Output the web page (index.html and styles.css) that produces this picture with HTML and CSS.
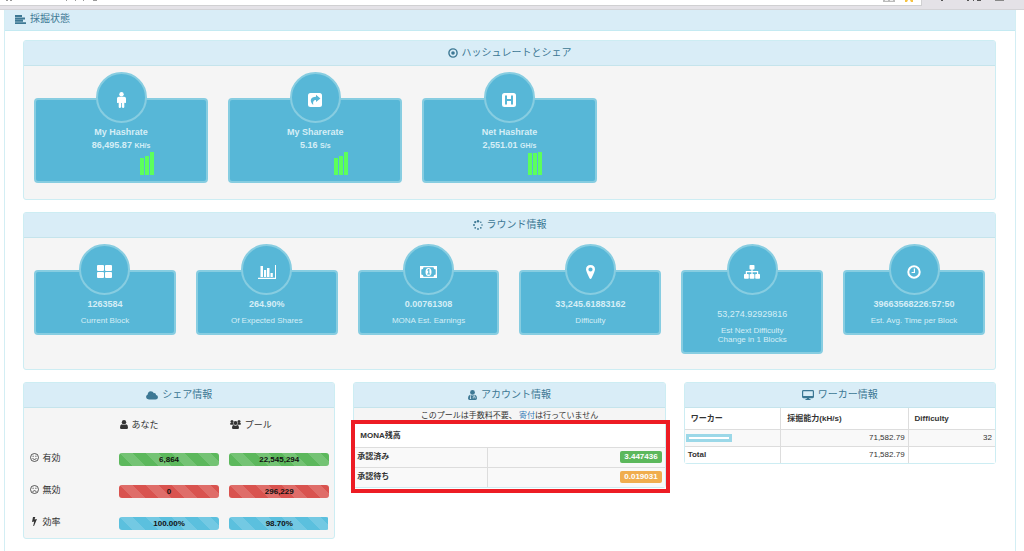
FILE: index.html
```html
<!DOCTYPE html>
<html lang="ja">
<head>
<meta charset="utf-8">
<title>採掘状態</title>
<link rel="stylesheet" href="styles.css">
</head>
<body>
<div class="toolbar" aria-hidden="true">
  <div class="toolbar-field">
    <svg width="100" height="2" viewBox="0 0 100 2"><path fill="#999" d="M6 0h2v1H6zM10 0h2v1h-2zM66 0h1v1h-1zM75 0h1v1h-1zM83 0h1v1h-1zM93 0h4v1h-4z"/></svg>
    <svg width="40" height="2" viewBox="0 0 40 2"><path fill="#bbb" d="M2 0h12v2H2z"/><path fill="#eee" d="M4 0h3v1H4zM9 0h3v1H9z"/><path fill="#f5c242" d="M24 0h3l-1 2h-2zM29 0h3v2h-2z"/></svg>
  </div>
  <svg class="toolbar-actions" width="90" height="2" viewBox="0 0 90 2"><path fill="#555" d="M7 0h2v1H7zM33 0h2v1h-2zM39 0h1v1h-1zM43 0h4v1h-4z"/><path fill="#888" d="M61 0h9v1h-9z"/></svg>
</div>

<main class="dashboard">
  <h1 class="dashboard-title">
    <svg width="11" height="9" viewBox="0 0 11 9"><path fill="currentColor" d="M0 0h7v2H0zM0 2.400h10v2H0zM0 4.800h8v2H0zM0 7.200h11V9H0z"/></svg>
    採掘状態
  </h1>
  <div class="dashboard-body">

    <section class="panel">
      <h2 class="panel-title">
        <svg width="10" height="10" viewBox="0 0 10 10"><circle cx="5" cy="5" r="4.100" fill="none" stroke="currentColor" stroke-width="1.400"/><circle cx="5" cy="5" r="1.800" fill="currentColor"/></svg>
        ハッシュレートとシェア
      </h2>
      <div class="cards cards-rate">
        <article class="card">
          <div class="card-icon"><svg width="9" height="16" viewBox="0 0 9 16"><circle cx="4.500" cy="2.300" r="2.200" fill="#fff"/><path fill="#fff" d="M1.800 4.800h5.400Q9 4.800 9 6.600v3.600q0 .9-.8.9t-.9-.9v4.700q0 1-1.200 1-.9 0-1.200-1V11h-.8v3.900q-.3 1-1.200 1-1.200 0-1.200-1v-4.700q-.1.9-.9.9T0 10.200V6.600q0-1.800 1.800-1.800z"/></svg></div>
          <h3 class="card-value">My Hashrate</h3>
          <p class="card-value">86,495.87 <small>KH/s</small></p>
          <svg class="card-bars" width="14" height="23" viewBox="0 0 14 23"><path fill="#5cff5c" d="M0 6h4v17H0zM5 4h4v19H5zM10 0h4v23h-4z"/></svg>
        </article>
        <article class="card">
          <div class="card-icon"><svg width="14" height="14" viewBox="0 0 14 14"><rect width="14" height="14" rx="2.500" fill="#fff"/><path fill="#57b7d7" d="M8 1.800 12.400 5.400 8 9V7.100C5.600 7 4.700 8.600 5.200 12 1 8.200 2.500 3.800 8 3.800z"/></svg></div>
          <h3 class="card-value">My Sharerate</h3>
          <p class="card-value">5.16 <small>S/s</small></p>
          <svg class="card-bars" width="14" height="23" viewBox="0 0 14 23"><path fill="#5cff5c" d="M0 6h4v17H0zM5 4h4v19H5zM10 0h4v23h-4z"/></svg>
        </article>
        <article class="card">
          <div class="card-icon"><svg width="14" height="14" viewBox="0 0 14 14"><rect width="14" height="14" rx="2.500" fill="#fff"/><path fill="none" stroke="#57b7d7" stroke-width="2" d="M4 2.500v9M10 2.500v9M4 7h6"/></svg></div>
          <h3 class="card-value">Net Hashrate</h3>
          <p class="card-value">2,551.01 <small>GH/s</small></p>
          <svg class="card-bars" width="14" height="23" viewBox="0 0 14 23"><path fill="#5cff5c" d="M0 1h4v22H0zM5 1h4v22H5zM10 0h4v23h-4z"/></svg>
        </article>
      </div>
    </section>

    <section class="panel">
      <h2 class="panel-title">
        <svg width="10" height="10" viewBox="0 0 10 10"><g fill="currentColor"><circle cx="5" cy="1.200" r="1.200"/><circle cx="7.800" cy="2.200" r=".8"/><circle cx="9" cy="5" r=".8"/><circle cx="7.800" cy="7.800" r=".9"/><circle cx="5" cy="9" r=".9"/><circle cx="2.200" cy="7.800" r=".9"/><circle cx="1" cy="5" r="1"/><circle cx="2.200" cy="2.200" r="1.100"/></g></svg>
        ラウンド情報
      </h2>
      <div class="cards cards-round">
        <article class="card">
          <div class="card-icon"><svg width="15" height="13" viewBox="0 0 15 13"><g fill="#fff"><rect width="7" height="6" rx="1"/><rect x="8" width="7" height="6" rx="1"/><rect y="7" width="7" height="6" rx="1"/><rect x="8" y="7" width="7" height="6" rx="1"/></g></svg></div>
          <h3 class="card-value">1263584</h3>
          <p class="card-label">Current Block</p>
        </article>
        <article class="card">
          <div class="card-icon"><svg width="18" height="14" viewBox="0 0 18 14"><path fill="#fff" d="M0 12.700h17V0h1v14H0zM2.500 1H5v11H2.500zM6 5h2.200v7H6zM9 3h2.500v9H9zM12.500 8h2.300v4h-2.300z"/></svg></div>
          <h3 class="card-value">264.90%</h3>
          <p class="card-label">Of Expected Shares</p>
        </article>
        <article class="card">
          <div class="card-icon"><svg width="17" height="12" viewBox="0 0 17 12"><path fill="#fff" d="M0 0h17v12H0z"/><path fill="#57b7d7" d="M3.500 1.300h10q0 2.200 2.200 2.200v5q-2.200 0-2.200 2.200h-10q0-2.200-2.200-2.200v-5q2.200 0 2.200-2.200z"/><ellipse cx="8.500" cy="6" rx="3" ry="4" fill="#fff"/><path fill="#57b7d7" d="M7.300 4 8.400 3h1v4.500h.8v1H7.100v-1H8.200v-3l-.6.4z"/></svg></div>
          <h3 class="card-value">0.00761308</h3>
          <p class="card-label">MONA Est. Earnings</p>
        </article>
        <article class="card">
          <div class="card-icon"><svg width="9" height="14" viewBox="0 0 9 14"><path fill="#fff" fill-rule="evenodd" d="M4.500 0Q9 .2 9 4.500 9 6 5.500 13.300q-1 1.200-2 0Q0 6 0 4.500 0 .2 4.500 0zm0 2.400a2.100 2.100 0 1 0 0 4.200 2.100 2.100 0 1 0 0-4.200z"/></svg></div>
          <h3 class="card-value">33,245.61883162</h3>
          <p class="card-label">Difficulty</p>
        </article>
        <article class="card">
          <div class="card-icon"><svg width="16" height="14" viewBox="0 0 16 14"><g fill="#fff"><rect x="5.500" width="5" height="4.500" rx=".8"/><rect y="9" width="4.800" height="4.800" rx=".8"/><rect x="5.600" y="9" width="4.800" height="4.800" rx=".8"/><rect x="11.200" y="9" width="4.800" height="4.800" rx=".8"/></g><path fill="none" stroke="#fff" stroke-width="1.200" d="M8 4v5M2.400 9V6.600h11.200V9"/></svg></div>
          <p class="card-value card-value-plain">53,274.92929816</p>
          <p class="card-label">Est Next Difficulty<br>Change in 1 Blocks</p>
        </article>
        <article class="card">
          <div class="card-icon"><svg width="14" height="14" viewBox="0 0 14 14"><circle cx="7" cy="7" r="5.700" fill="none" stroke="#fff" stroke-width="2"/><path fill="none" stroke="#fff" stroke-width="1.200" d="M7.400 3.500v4H4.600"/></svg></div>
          <h3 class="card-value">39663568226:57:50</h3>
          <p class="card-label">Est. Avg. Time per Block</p>
        </article>
      </div>
    </section>

    <div class="columns">
      <section class="panel">
        <h2 class="panel-title">
          <svg width="12" height="9" viewBox="0 0 12 9"><path fill="currentColor" d="M3 8.500Q.2 8.300 0 6q.1-1.700 1.700-2.400Q1.800.4 4.800.2 7 .3 7.900 2.200q1.700-.7 2.200 1.700Q12 4.400 12 6.200q-.2 2.200-2.500 2.300z"/></svg>
          シェア情報
        </h2>
        <table class="shares">
          <thead>
            <tr>
              <td></td>
              <th scope="col"><svg width="8" height="9" viewBox="0 0 8 9"><circle cx="4" cy="2.200" r="2.200" fill="currentColor"/><path fill="currentColor" d="M1.800 4.200q2.200 1.600 4.400 0Q8 4.600 8 7.500 8 9 6.700 9H1.300Q0 9 0 7.500 0 4.600 1.800 4.200z"/></svg> あなた</th>
              <th scope="col"><svg width="11" height="9" viewBox="0 0 11 9"><g fill="currentColor"><circle cx="2" cy="1.600" r="1.500"/><circle cx="9" cy="1.600" r="1.500"/><circle cx="5.500" cy="3" r="2"/><path d="M1 3h2.200q0 1 .8 1.700H1.500Q0 5 0 3.800 0 3 1 3zM10 3H7.800q0 1-.8 1.700h2.500Q11 5 11 3.800 11 3 10 3zM3.600 5q1.900 1.300 3.800 0Q9 5.300 9 7.700 9 9 7.800 9H3.200Q2 9 2 7.700 2 5.300 3.600 5z"/></g></svg> プール</th>
            </tr>
          </thead>
          <tbody>
            <tr>
              <th scope="row"><svg width="9" height="9" viewBox="0 0 9 9"><g fill="none" stroke="currentColor" stroke-width=".8"><circle cx="4.500" cy="4.500" r="4"/><path d="M2.500 5.500q2 2 4 0"/></g><path fill="currentColor" d="M2.600 2.800h1v1h-1zM5.400 2.800h1v1h-1z"/></svg> 有効</th>
              <td><div class="meter"><div class="meter-fill valid" style="width:100%"></div><span class="meter-text">6,864</span></div></td>
              <td><div class="meter"><div class="meter-fill valid" style="width:100%"></div><span class="meter-text">22,545,294</span></div></td>
            </tr>
            <tr>
              <th scope="row"><svg width="9" height="9" viewBox="0 0 9 9"><g fill="none" stroke="currentColor" stroke-width=".8"><circle cx="4.500" cy="4.500" r="4"/><path d="M2.500 6.600q2-2 4 0"/></g><path fill="currentColor" d="M2.600 2.800h1v1h-1zM5.400 2.800h1v1h-1z"/></svg> 無効</th>
              <td><div class="meter"><div class="meter-fill invalid" style="width:100%"></div><span class="meter-text">0</span></div></td>
              <td><div class="meter"><div class="meter-fill invalid" style="width:100%"></div><span class="meter-text">296,229</span></div></td>
            </tr>
            <tr>
              <th scope="row"><svg width="9" height="9" viewBox="0 0 9 9"><path fill="currentColor" d="M3 0h2.300L4.500 2.500 7 2 4 9h-.8l1-4.500L2 5z"/></svg> 効率</th>
              <td><div class="meter"><div class="meter-fill rate" style="width:100%"></div><span class="meter-text">100.00%</span></div></td>
              <td><div class="meter"><div class="meter-fill rate" style="width:98.7%"></div><span class="meter-text">98.70%</span></div></td>
            </tr>
          </tbody>
        </table>
      </section>

      <section class="panel">
        <h2 class="panel-title">
          <svg width="9" height="10" viewBox="0 0 9 10"><circle cx="4.500" cy="2.400" r="2.400" fill="currentColor"/><path fill="currentColor" d="M2 4.800q2.500 1.400 5 0Q9 5.300 9 8.300 9 10 7.500 10h-6Q0 10 0 8.300 0 5.300 2 4.800z"/><path fill="none" stroke="#d9edf7" stroke-width=".7" d="M2.500 5.200v3M6.300 5.200v1.500M5.200 8.500V6.800h2v1.700"/><circle cx="2.500" cy="8.200" r=".7" fill="#d9edf7"/></svg>
          アカウント情報
        </h2>
        <p class="notice">このプールは手数料不要、 <a href="#donate">寄付</a>は行っていません</p>
        <div class="balance">
          <table class="data">
            <colgroup><col class="w-43"><col></colgroup>
            <thead><tr><th class="balance-title" scope="colgroup" colspan="2">MONA残高</th></tr></thead>
            <tbody>
              <tr class="shaded"><th scope="row">承認済み</th><td><span class="badge confirmed">3.447436</span></td></tr>
              <tr class="shaded"><th scope="row">承認待ち</th><td><span class="badge pending">0.019031</span></td></tr>
            </tbody>
          </table>
        </div>
      </section>

      <section class="panel">
        <h2 class="panel-title">
          <svg width="12" height="10" viewBox="0 0 12 10"><rect x=".6" y=".6" width="10.800" height="7" rx=".8" fill="none" stroke="currentColor" stroke-width="1.200"/><path fill="currentColor" d="M1 6h10v1.500H1zM4.800 7.500h2.400V9H8.500v1h-5V9h1.300z"/></svg>
          ワーカー情報
        </h2>
        <table class="data workers">
          <colgroup><col class="w-31"><col class="w-41"><col></colgroup>
          <thead><tr><th scope="col">ワーカー</th><th scope="col">採掘能力(kH/s)</th><th scope="col">Difficulty</th></tr></thead>
          <tbody>
            <tr class="shaded"><th scope="row"><span class="masked"></span></th><td>71,582.79</td><td>32</td></tr>
            <tr><th scope="row">Total</th><td>71,582.79</td><td></td></tr>
          </tbody>
        </table>
      </section>
    </div>
  </div>
</main>
</body>
</html>
```
FILE: styles.css
```css
* {
  box-sizing: border-box;
}

body {
  display: flex;
  flex-direction: column;
  min-height: 100vh;
  margin: 0;
  background: #fff;
  color: #333;
  font: 8px/12px "Liberation Sans", "Noto Sans CJK JP", sans-serif;
}

h1, h2, h3, p {
  margin: 0;
}

svg {
  flex: none;
}

/* Toolbar strip */
.toolbar {
  display: flex;
  gap: 12px;
  height: 10px;
  background: #e4e2e7;
  border-bottom: 1px solid #d3d3d6;
}

.toolbar-field {
  display: flex;
  justify-content: space-between;
  width: 90%;
  height: 6px;
  background: #fff;
  border: solid #d0d0d2;
  border-width: 0 1px 1px 0;
}

/* Outer frame */
.dashboard {
  flex: 1;
  margin: 0 8px 0 4px;
  border: solid #d3eef4;
  border-width: 0 1px;
}

.dashboard-title {
  display: flex;
  align-items: center;
  gap: 4px;
  height: 21px;
  padding: 0 10px 2px;
  background: #d9edf7;
  border-bottom: 1px solid #c4eaf2;
  color: #3d7894;
  font-size: 10px;
  font-weight: normal;
}

.dashboard-body {
  display: flex;
  flex-direction: column;
  gap: 12px;
  padding: 9px 19px 12px 18px;
}

/* Panels */
.panel {
  background: #f5f5f5;
  border: 1px solid #cdedf3;
  border-radius: 3px;
}

.panel-title {
  display: flex;
  align-items: center;
  justify-content: center;
  gap: 4px;
  height: 25px;
  background: #d9edf7;
  border-bottom: 1px solid #c5e4ec;
  border-radius: 2px 2px 0 0;
  color: #3d7894;
  font-size: 10px;
  font-weight: normal;
}

/* Stat cards */
.cards {
  display: grid;
  align-items: start;
  padding: 6px 0 16px;
}

.cards-rate {
  grid-template-columns: repeat(5, 1fr);
}

.cards-round {
  grid-template-columns: repeat(6, 1fr);
  padding-bottom: 15px;
}

.card {
  display: flex;
  flex-direction: column;
  align-items: center;
  margin: 26px 10px 0;
  padding-bottom: 8px;
  background: #57b7d7;
  border: 2px solid #87cde1;
  border-radius: 4px;
  color: #d5eef6;
  text-align: center;
}

.cards-rate .card {
  padding-bottom: 6px;
}

.card-icon {
  display: flex;
  align-items: center;
  justify-content: center;
  width: 51px;
  height: 51px;
  margin: -28px 0 3px;
  padding-top: 4px;
  background: #57b7d7;
  border: 2px solid #87cde1;
  border-radius: 50%;
}

.card-value {
  font-size: 9px;
  font-weight: bold;
  line-height: 13px;
}

.card-value small {
  font-size: 7px;
}

.card-value-plain {
  padding-top: 10px;
  font-weight: normal;
}

.card-label {
  margin-top: 5px;
  line-height: 9px;
}

.card-bars {
  margin-left: 52px;
}

/* Bottom row */
.columns {
  display: grid;
  grid-template-columns: repeat(3, 1fr);
  align-items: start;
  gap: 18px;
}

table {
  width: 100%;
  border-collapse: collapse;
  table-layout: fixed;
}

.shares th,
.shares td {
  height: 32px;
  padding: 0 5px;
  font-weight: normal;
  font-size: 9px;
  text-align: left;
  vertical-align: middle;
}

.shares thead th,
.shares thead td {
  height: 34px;
}

.shares thead td {
  width: 29%;
}

.shares th svg {
  margin: 0 1px;
  vertical-align: -1px;
}

.shares tbody td {
  padding-top: 2px;
}

.meter {
  position: relative;
  height: 13px;
  border-radius: 3px;
  overflow: hidden;
}

.meter-fill {
  height: 100%;
  background-image: linear-gradient(45deg, rgba(255, 255, 255, 0.15) 25%, transparent 25%, transparent 50%, rgba(255, 255, 255, 0.15) 50%, rgba(255, 255, 255, 0.15) 75%, transparent 75%);
  background-size: 26px 26px;
}

.meter-text {
  position: absolute;
  inset: 0;
  color: #111;
  font-size: 8px;
  font-weight: bold;
  line-height: 13px;
  text-align: center;
}

.valid {
  background-color: #5cb85c;
}

.invalid {
  background-color: #d9534f;
}

.rate {
  background-color: #5bc0de;
}

.notice {
  height: 15px;
  line-height: 16px;
  text-align: center;
}

.notice a {
  color: #337ab7;
  text-decoration: none;
}

.data {
  background: #fff;
}

.data th,
.data td {
  height: 17px;
  padding: 0 3px;
  border: 1px solid #ddd;
  text-align: right;
}

.data th {
  text-align: left;
}

.data tr > :first-child {
  border-left: 0;
}

.data tr > :last-child {
  border-right: 0;
}

.data thead th {
  height: 21px;
  padding: 2px 6px 0;
  border-top: 0;
}

.data tbody tr:last-child > * {
  border-bottom: 0;
}

.shaded {
  background: #f9f9f9;
}

.w-31 {
  width: 31%;
}

.w-41 {
  width: 41%;
}

.w-43 {
  width: 43%;
}

.balance {
  position: relative;
}

.balance::after {
  content: "";
  position: absolute;
  inset: -3px -5px -6px -3px;
  border: 4px solid #ed1c24;
}

.balance .data .balance-title {
  height: 24px;
}

.balance tbody th,
.balance tbody td {
  height: 20px;
}

.badge {
  display: inline-block;
  padding: 0 4px;
  border-radius: 2px;
  color: #fff;
  font-weight: bold;
}

.confirmed {
  background: #5cb85c;
}

.pending {
  background: #f0ad4e;
}

.masked {
  display: block;
  width: 46px;
  height: 8px;
  margin-left: -2px;
  background: #fff;
  border: 3px solid #9bd8e8;
}
```
